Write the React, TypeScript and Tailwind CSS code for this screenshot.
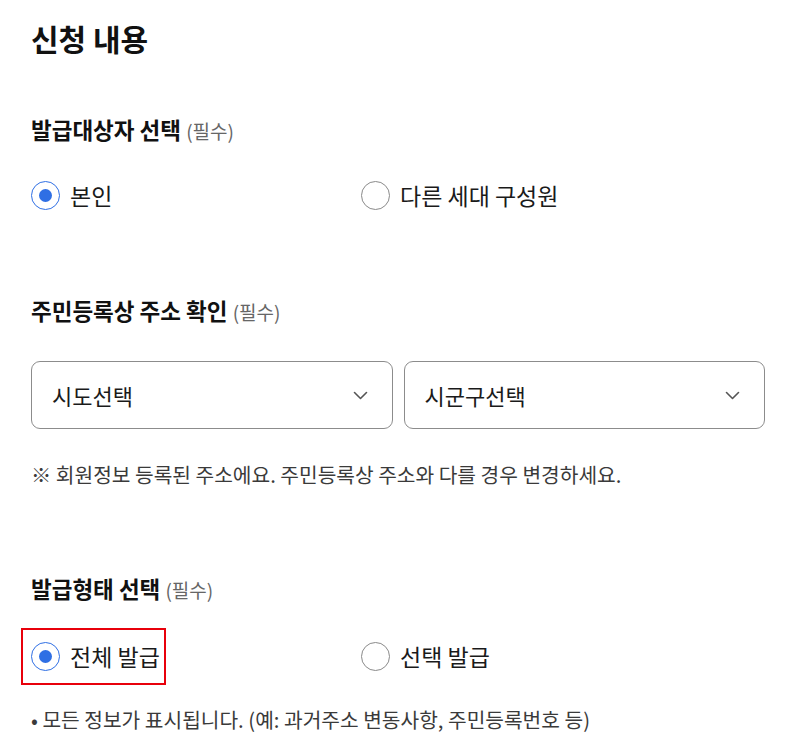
import { useState } from 'react';

const FONT = { fontFamily: '"Noto Sans CJK KR", "Noto Sans", sans-serif' };

type Option = { id: string; label: string };

// Radio row (two options per row)
function RadioRow({
  options,
  value,
  onChange,
  highlight,
}: {
  options: Option[];
  value: string;
  onChange: (id: string) => void;
  highlight?: string;
}) {
  return (
    <div className="flex h-[40px] items-center">
      {options.map((opt) => {
        const checked = opt.id === value;
        return (
          <label
            key={opt.id}
            className="relative flex w-[330px] cursor-pointer items-center"
            onClick={() => onChange(opt.id)}
          >
            {highlight === opt.id && (
              <span className="pointer-events-none absolute left-[-10px] top-[-8px] h-[57px] w-[145px] border-2 border-[#e8000b]" />
            )}
            <span
              className={
                checked
                  ? 'flex h-[29px] w-[29px] items-center justify-center rounded-full border border-[#2f6fe4] bg-white'
                  : 'flex h-[29px] w-[29px] items-center justify-center rounded-full border border-[#8a8a8a] bg-white'
              }
            >
              {checked && <span className="h-[13px] w-[13px] rounded-full bg-[#2f6fe4]" />}
            </span>
            <span className="ml-[10px] text-[23px] leading-[40px] text-[#1a1a1a]">{opt.label}</span>
          </label>
        );
      })}
    </div>
  );
}

function SectionTitle({ title }: { title: string }) {
  return (
    <h3 className="text-[22.5px] font-bold leading-[30px] text-[#111]">
      {title} <span className="text-[19px] font-normal text-[#666]">(필수)</span>
    </h3>
  );
}

function SelectBox({ placeholder }: { placeholder: string }) {
  return (
    <button className="flex h-[68px] flex-1 items-center justify-between rounded-[9px] border border-[#8c8c8c] bg-white pl-[20px] pr-[24px] text-left">
      <span className="text-[22px] text-[#1a1a1a]">{placeholder}</span>
      <svg width="15" height="9" viewBox="0 0 15 9" fill="none">
        <path d="M1.5 1.5L7.5 7.5L13.5 1.5" stroke="#555" strokeWidth="1.6" strokeLinecap="round" strokeLinejoin="round" />
      </svg>
    </button>
  );
}

export default function App() {
  const [target, setTarget] = useState('self');
  const [issueType, setIssueType] = useState('all');

  return (
    <div className="min-h-screen bg-white pl-[31px] pr-[42px] pt-[20px]" style={FONT}>
      <h2 className="text-[30px] font-bold leading-[36px] text-[#111]">신청 내용</h2>

      {/* 발급대상자 */}
      <div className="mt-[58px]">
        <SectionTitle title="발급대상자 선택" />
        <div className="mt-[29px]">
          <RadioRow
            options={[
              { id: 'self', label: '본인' },
              { id: 'other', label: '다른 세대 구성원' },
            ]}
            value={target}
            onChange={setTarget}
          />
        </div>
      </div>

      {/* 주소 확인 */}
      <div className="mt-[80px]">
        <SectionTitle title="주민등록상 주소 확인" />
        <div className="mt-[34px] flex gap-[11px]">
          <SelectBox placeholder="시도선택" />
          <SelectBox placeholder="시군구선택" />
        </div>
        <p className="mt-[31px] text-[20.3px] leading-[28px] text-[#3a3a3a]">
          ※ 회원정보 등록된 주소에요. 주민등록상 주소와 다를 경우 변경하세요.
        </p>
      </div>

      {/* 발급형태 */}
      <div className="mt-[85px]">
        <SectionTitle title="발급형태 선택" />
        <div className="mt-[31px]">
          <RadioRow
            options={[
              { id: 'all', label: '전체 발급' },
              { id: 'partial', label: '선택 발급' },
            ]}
            value={issueType}
            onChange={setIssueType}
            highlight="all"
          />
        </div>
        <p className="mt-[29px] text-[20.3px] leading-[28px] text-[#3a3a3a]">
          • 모든 정보가 표시됩니다. (예: 과거주소 변동사항, 주민등록번호 등)
        </p>
      </div>
    </div>
  );
}
